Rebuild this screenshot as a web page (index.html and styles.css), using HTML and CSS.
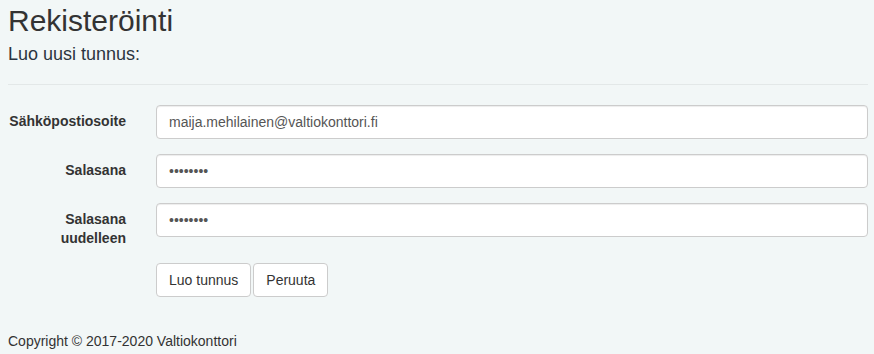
FILE: index.html
```html
<!DOCTYPE html>
<html lang="fi">
<head>
<meta charset="utf-8">
<title>Rekisteröinti</title>
<link rel="stylesheet" href="styles.css">
</head>
<body>
<div class="page">
  <h1 class="title">Rekisteröinti</h1>
  <p class="subtitle">Luo uusi tunnus:</p>
  <hr class="divider">
  <form class="form">
    <div class="row">
      <label class="label" for="email">Sähköpostiosoite</label>
      <input class="input" id="email" type="text" value="maija.mehilainen@valtiokonttori.fi">
    </div>
    <div class="row">
      <label class="label" for="pw">Salasana</label>
      <input class="input" id="pw" type="password" value="salasana">
    </div>
    <div class="row">
      <label class="label" for="pw2">Salasana uudelleen</label>
      <input class="input" id="pw2" type="password" value="salasana">
    </div>
    <div class="row">
      <span class="label"></span>
      <div class="buttons">
        <button class="btn" type="button">Luo tunnus</button>
        <button class="btn" type="button">Peruuta</button>
      </div>
    </div>
  </form>
  <footer class="footer">Copyright © 2017-2020 Valtiokonttori</footer>
</div>
</body>
</html>
```

FILE: styles.css
```css
html, body {
  margin: 0;
  padding: 0;
  background: #f2f7f7;
}
body {
  font-family: "Liberation Sans", Arial, sans-serif;
  font-size: 14px;
  line-height: 20px;
  color: #333;
}
.page {
  padding: 0 6px 0 8px;
}
.title {
  margin: 4px 0 0 0;
  font-size: 30px;
  line-height: 33px;
  font-weight: 400;
  color: #333;
}
.subtitle {
  margin: 7px 0 0 0;
  font-size: 18px;
  line-height: 20px;
  color: #2b3440;
}
.divider {
  margin: 20px 0 20px 0;
  border: 0;
  border-top: 1px solid #e3e8e8;
  height: 0;
}
.form {
  display: flex;
  flex-direction: column;
  gap: 15px;
}
.row {
  display: grid;
  grid-template-columns: 118px 1fr;
  column-gap: 30px;
  align-items: start;
}
.label {
  padding-top: 7px;
  text-align: right;
  font-weight: 700;
  line-height: 19px;
  color: #333;
}
.input {
  box-sizing: border-box;
  height: 34px;
  width: 100%;
  margin: 0;
  padding: 6px 12px;
  font-family: "Liberation Sans", Arial, sans-serif;
  font-size: 14px;
  color: #555;
  background: #fff;
  border: 1px solid #ccc;
  border-radius: 4px;
  box-shadow: inset 0 1px 1px rgba(0,0,0,0.075);
  outline: none;
}
.buttons {
  display: flex;
  gap: 2px;
}
.btn {
  box-sizing: border-box;
  height: 34px;
  margin: 0;
  padding: 6px 12px;
  font-family: "Liberation Sans", Arial, sans-serif;
  font-size: 14px;
  line-height: 20px;
  color: #333;
  background: #fff;
  border: 1px solid #ccc;
  border-radius: 4px;
}
.footer {
  margin-top: 34px;
  line-height: 20px;
  color: #333;
}
```
